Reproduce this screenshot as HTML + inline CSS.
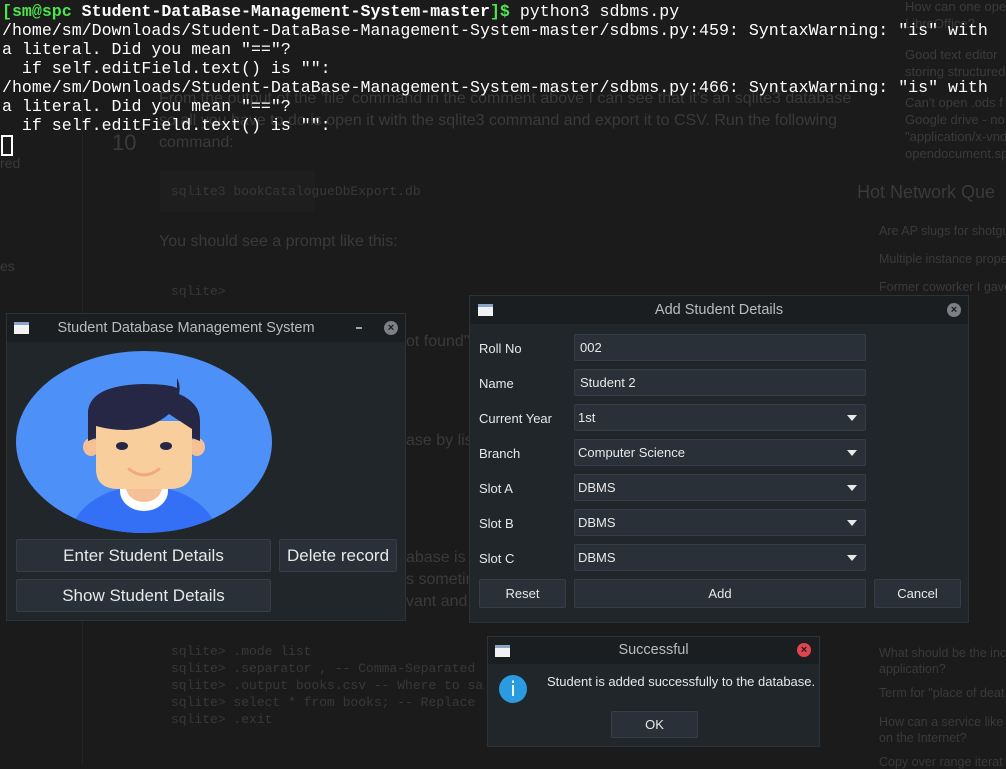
<!DOCTYPE html>
<html><head><meta charset="utf-8"><style>
*{margin:0;padding:0;box-sizing:border-box}
body{width:1006px;height:765px;background:#1b1b1b;position:relative;overflow:hidden;font-family:"Liberation Sans",sans-serif}
.a{position:absolute}
.bg{color:#3a3a3a;font-size:16px;white-space:nowrap}
.bgm{color:#383838;font-family:"Liberation Mono",monospace;font-size:13px;white-space:pre;line-height:17px}
.term{position:absolute;left:2px;top:2px;font-family:"Liberation Mono","DejaVu Sans Mono",monospace;font-size:16.6px;line-height:19px;color:#fff;white-space:pre}
.win{position:absolute;background:#20262a;border:1px solid #2c3236}
.tb{position:absolute;left:0;right:0;top:0;height:28px;background:#1a1e21;color:#b8bcbf;font-family:"Liberation Sans",sans-serif;font-size:14.5px;text-align:center;line-height:28px}
.ico{position:absolute;width:15px;height:12px;background:#f2f2f2;border-top:3px solid #8aa4c8}
.btn{position:absolute;background:#293038;border:1px solid #363d45;border-radius:2px;color:#e8e8e8;font-family:"Liberation Sans",sans-serif;text-align:center}
.lbl{position:absolute;left:9px;color:#e8e8e8;font-family:"Liberation Sans",sans-serif;font-size:13px}
.fld{position:absolute;left:104px;width:292px;height:27px;background:#2a3037;border:1px solid #363d45;border-radius:2px;color:#e8e8e8;font-family:"Liberation Sans",sans-serif;font-size:13px;line-height:26px;padding-left:5px}
.arr{position:absolute;right:8px;top:10px;width:0;height:0;border-left:5px solid transparent;border-right:5px solid transparent;border-top:6px solid #e8e8e8}
.x{position:absolute;width:14px;height:14px;border-radius:50%;background:#7c8084;color:#1a1e21;font-size:11px;line-height:14px;text-align:center;font-weight:bold}
</style></head><body>
<div class="a" style="left:82px;top:0;width:1px;height:765px;background:#242424"></div>
<div class="a" style="left:5px;top:313px;width:400px;height:1px;background:#2a2a2a"></div>
<div class="a bg" style="left:0;top:155px;font-size:14px">red</div>
<div class="a bg" style="left:0;top:258px;font-size:14px">es</div>
<div class="a bg" style="left:112px;top:130px;font-size:22px">10</div>
<div class="a bg" style="left:159px;top:90px">From the output of the 'file' command in the comment above I can see that it's an sqlite3 database</div>
<div class="a bg" style="left:159px;top:112px">so all you have to do is open it with the sqlite3 command and export it to CSV. Run the following</div>
<div class="a bg" style="left:159px;top:134px">command:</div>
<div class="a" style="left:160px;top:170px;width:155px;height:42px;background:#1e1e1e"></div>
<div class="a bgm" style="left:171px;top:183px">sqlite3 bookCatalogueDbExport.db</div>
<div class="a bg" style="left:159px;top:233px">You should see a prompt like this:</div>
<div class="a bgm" style="left:171px;top:283px">sqlite&gt;</div>
<div class="a bg" style="left:406px;top:333px">ot found"</div>
<div class="a bg" style="left:406px;top:432px">ase by list</div>
<div class="a bg" style="left:406px;top:549px">abase is</div>
<div class="a bg" style="left:406px;top:571px">s sometim</div>
<div class="a bg" style="left:406px;top:593px">vant and</div>
<div class="a bgm" style="left:171px;top:643px">sqlite&gt; .mode list
sqlite&gt; .separator , -- Comma-Separated
sqlite&gt; .output books.csv -- Where to sa
sqlite&gt; select * from books; -- Replace
sqlite&gt; .exit</div>
<div class="a bg" style="left:905px;top:-2px;font-size:13px;line-height:17px">How can one ope<br>LibreOffice?</div>
<div class="a bg" style="left:905px;top:46px;font-size:13px;line-height:17px">Good text editor<br>storing structured</div>
<div class="a bg" style="left:905px;top:94px;font-size:13px;line-height:17px">Can't open .ods f<br>Google drive - no<br>"application/x-vnd<br>opendocument.sp</div>
<div class="a bg" style="left:857px;top:182px;font-size:18px">Hot Network Que</div>
<div class="a bg" style="left:879px;top:224px;font-size:12.5px">Are AP slugs for shotgu</div>
<div class="a bg" style="left:879px;top:252px;font-size:12.5px">Multiple instance prope</div>
<div class="a bg" style="left:879px;top:280px;font-size:12.5px">Former coworker I gave</div>
<div class="a bg" style="left:879px;top:645px;font-size:12.5px;line-height:16px">What should be the inc<br>application?</div>
<div class="a bg" style="left:879px;top:686px;font-size:12.5px">Term for "place of deat</div>
<div class="a bg" style="left:879px;top:714px;font-size:12.5px;line-height:16px">How can a service like<br>on the Internet?</div>
<div class="a bg" style="left:879px;top:755px;font-size:12.5px">Copy over range iterat</div>

<div class="term"><span style="color:#4ee44e;font-weight:bold">[sm@spc </span><b>Student-DataBase-Management-System-master</b><span style="color:#4ee44e;font-weight:bold">]$</span> python3 sdbms.py
/home/sm/Downloads/Student-DataBase-Management-System-master/sdbms.py:459: SyntaxWarning: "is" with
a literal. Did you mean "=="?
  if self.editField.text() is "":
/home/sm/Downloads/Student-DataBase-Management-System-master/sdbms.py:466: SyntaxWarning: "is" with
a literal. Did you mean "=="?
  if self.editField.text() is "":
</div>
<div class="a" style="left:1px;top:135px;width:12px;height:21px;border:2px solid #fff"></div>

<!-- Main window -->
<div class="win" style="left:6px;top:313px;width:400px;height:308px">
 <div class="tb" style="text-indent:-40px">Student Database Management System</div>
 <div class="ico" style="left:7px;top:8px"></div>
 <div class="a" style="left:349px;top:13px;width:6px;height:2px;background:#9aa"></div>
 <div class="x" style="left:377px;top:7px">×</div>
 <svg class="a" style="left:0;top:28px" width="400" height="200" viewBox="6 341 400 200">
  <defs><clipPath id="c"><ellipse cx="143" cy="441" rx="128" ry="91"/></clipPath></defs>
  <ellipse cx="143" cy="441" rx="128" ry="91" fill="#4d90f8"/>
  <g clip-path="url(#c)">
   <ellipse cx="143" cy="540" rx="75" ry="55" fill="#3370f5"/>
   <ellipse cx="143" cy="490" rx="24" ry="20" fill="#fff"/>
   <ellipse cx="143" cy="486" rx="18" ry="15" fill="#f5c095"/>
  </g>
  <ellipse cx="90" cy="446" rx="8" ry="9" fill="#f5c095"/>
  <ellipse cx="196" cy="446" rx="8" ry="9" fill="#f5c095"/>
  <path d="M95 420 L95 468 Q95 488 118 488 L168 488 Q191 488 191 468 L191 420 Z" fill="#f8ce9c"/>
  <path d="M87 440 L87 410 Q90 384 143 383 Q168 383 176 387 L176 377 Q180 385 178 393 Q199 402 199 420 L199 440 L191 437 L191 428 L168 413 Q140 437 95 425 L95 437 Z" fill="#262645"/>
  <ellipse cx="121" cy="445" rx="6" ry="4" fill="#262645"/>
  <ellipse cx="165" cy="445" rx="6" ry="4" fill="#262645"/>
  <path d="M128 468 Q143 480 158 468" stroke="#f0a880" stroke-width="3" fill="none" stroke-linecap="round"/>
 </svg>
 <div class="btn" style="left:9px;top:225px;width:255px;height:33px;font-size:17px;line-height:31px">Enter Student Details</div>
 <div class="btn" style="left:272px;top:225px;width:118px;height:33px;font-size:17px;line-height:31px">Delete record</div>
 <div class="btn" style="left:9px;top:265px;width:255px;height:33px;font-size:17px;line-height:31px">Show Student Details</div>
</div>

<!-- Add dialog -->
<div class="win" style="left:469px;top:295px;width:500px;height:328px">
 <div class="tb">Add Student Details</div>
 <div class="ico" style="left:8px;top:8px"></div>
 <div class="x" style="left:477px;top:7px">×</div>
 <div class="lbl" style="top:45px">Roll No</div><div class="fld" style="top:38px">002</div>
 <div class="lbl" style="top:80px">Name</div><div class="fld" style="top:73px">Student 2</div>
 <div class="lbl" style="top:115px">Current Year</div><div class="fld" style="top:108px;padding-left:3px">1st<span class="arr"></span></div>
 <div class="lbl" style="top:150px">Branch</div><div class="fld" style="top:143px;padding-left:3px">Computer Science<span class="arr"></span></div>
 <div class="lbl" style="top:185px">Slot A</div><div class="fld" style="top:178px;padding-left:3px">DBMS<span class="arr"></span></div>
 <div class="lbl" style="top:220px">Slot B</div><div class="fld" style="top:213px;padding-left:3px">DBMS<span class="arr"></span></div>
 <div class="lbl" style="top:255px">Slot C</div><div class="fld" style="top:248px;padding-left:3px">DBMS<span class="arr"></span></div>
 <div class="btn" style="left:9px;top:283px;width:87px;height:29px;font-size:13px;line-height:27px">Reset</div>
 <div class="btn" style="left:104px;top:283px;width:292px;height:29px;font-size:13px;line-height:27px">Add</div>
 <div class="btn" style="left:404px;top:283px;width:87px;height:29px;font-size:13px;line-height:27px">Cancel</div>
</div>

<!-- Success dialog -->
<div class="win" style="left:487px;top:636px;width:333px;height:111px">
 <div class="tb" style="height:27px;line-height:27px">Successful</div>
 <div class="ico" style="left:7px;top:8px"></div>
 <div class="x" style="left:309px;top:6px;background:#e0454f;color:#1a1e21">×</div>
 <div class="a" style="left:11px;top:38px;width:28px;height:28px;border-radius:50%;background:#2a9be0;color:#fff;text-align:center;font-size:20px;line-height:28px;font-family:'DejaVu Sans',sans-serif">i</div>
 <div class="a" style="left:59px;top:37px;color:#e8e8e8;font-family:'Liberation Sans',sans-serif;font-size:13px;white-space:nowrap">Student is added successfully to the database.</div>
 <div class="btn" style="left:123px;top:74px;width:87px;height:27px;font-size:13px;line-height:25px">OK</div>
</div>
</body></html>
